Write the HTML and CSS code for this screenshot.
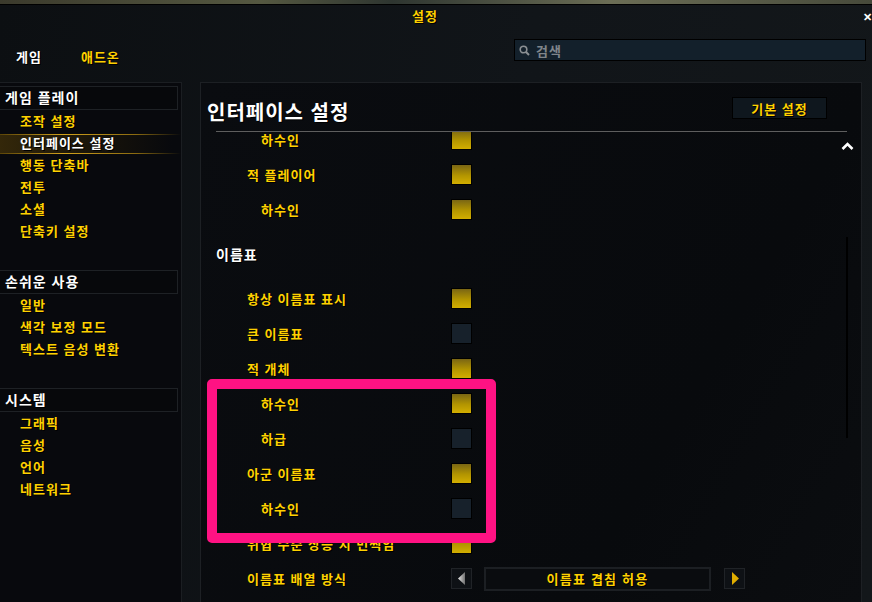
FILE: index.html
```html
<!DOCTYPE html>
<html lang="ko">
  <head>
    <meta charset="UTF-8">
    <title>설정</title>
    <link rel="stylesheet" href="styles.css">
  </head>
  <body>
    <div class="backdrop"></div>
    <div class="window">
      <div class="titlebar">
        <span class="title">설정</span>
        <span class="close">✕</span>
      </div>
      <div class="toolbar">
        <div class="tabs">
          <span class="tab">게임</span>
          <span class="tab active">애드온</span>
        </div>
        <div class="search">
          <svg width="11" height="11" viewBox="0 0 11 11"><circle cx="4.5" cy="4.5" r="3.3" fill="none" stroke="#8b8f93" stroke-width="1.6"/><path d="M7 7l3 3" stroke="#8b8f93" stroke-width="2"/></svg>
          <span>검색</span>
        </div>
      </div>
      <div class="main">
        <aside class="sidebar">
          <div class="group">
            <div class="group-head">게임 플레이</div>
            <div class="item">조작 설정</div>
            <div class="item selected">인터페이스 설정</div>
            <div class="item">행동 단축바</div>
            <div class="item">전투</div>
            <div class="item">소셜</div>
            <div class="item">단축키 설정</div>
          </div>
          <div class="group">
            <div class="group-head">손쉬운 사용</div>
            <div class="item">일반</div>
            <div class="item">색각 보정 모드</div>
            <div class="item">텍스트 음성 변환</div>
          </div>
          <div class="group">
            <div class="group-head">시스템</div>
            <div class="item">그래픽</div>
            <div class="item">음성</div>
            <div class="item">언어</div>
            <div class="item">네트워크</div>
          </div>
        </aside>
        <section class="panel">
          <div class="panel-head">
            <h1>인터페이스 설정</h1>
            <button class="btn">기본 설정</button>
          </div>
          <div class="rule"></div>
          <div class="panel-body">
            <div class="list">
              <div class="row first"><span class="label sub">하수인</span><span class="check on"></span></div>
              <div class="row"><span class="label">적 플레이어</span><span class="check on"></span></div>
              <div class="row"><span class="label sub">하수인</span><span class="check on"></span></div>
              <div class="section">이름표</div>
              <div class="row"><span class="label">항상 이름표 표시</span><span class="check on"></span></div>
              <div class="row"><span class="label">큰 이름표</span><span class="check"></span></div>
              <div class="row"><span class="label">적 개체</span><span class="check on"></span></div>
              <div class="row"><span class="label sub">하수인</span><span class="check on"></span></div>
              <div class="row"><span class="label sub">하급</span><span class="check"></span></div>
              <div class="row"><span class="label">아군 이름표</span><span class="check on"></span></div>
              <div class="row"><span class="label sub">하수인</span><span class="check"></span></div>
              <div class="row"><span class="label">위협 수준 상승 시 번쩍임</span><span class="check on"></span></div>
              <div class="row">
                <span class="label">이름표 배열 방식</span>
                <span class="arrow">
                  <svg width="8" height="13" viewBox="0 0 8 13"><defs><linearGradient id="gl" x1="0" y1="0" x2="1" y2="0"><stop offset="0" stop-color="#e8e8e8"/><stop offset="1" stop-color="#6f6f6f"/></linearGradient></defs><path d="M7 0v13L0 6.5z" fill="url(#gl)"/></svg>
                </span>
                <span class="select">이름표 겹침 허용</span>
                <span class="arrow">
                  <svg width="8" height="13" viewBox="0 0 8 13"><path d="M1 0v13l7-6.5z" fill="#e0ad00"/></svg>
                </span>
              </div>
            </div>
            <div class="scrollbar">
              <svg width="13" height="8" viewBox="0 0 13 8"><path d="M1.5 7L6.5 2l5 5" fill="none" stroke="#fff" stroke-width="2.6"/></svg>
              <div class="track"></div>
            </div>
          </div>
        </section>
      </div>
    </div>
    <div class="highlight"></div>
  </body>
</html>
```

FILE: styles.css
```css
html,
body {
  margin: 0;
  height: 602px;
  overflow: hidden;
  background: linear-gradient(180deg, #1b2a26, #2d2620 60%, #1a1715);
  font-family: "Noto Sans CJK KR", "Noto Sans", sans-serif;
  font-weight: bold;
  letter-spacing: 1px;
  color: #ffd100;
}
.backdrop {
  height: 4px;
  background: linear-gradient(90deg, #3b3a2c, #555841 30%, #2e3530 45%, #6b6d55 70%, #474a3b);
  border-bottom: 1px solid #000;
}
.window {
  height: 597px;
  background: linear-gradient(100deg, #0c0f12, #111519 55%, #13171a);
  display: flex;
  flex-direction: column;
}
.titlebar {
  position: relative;
  height: 26px;
  line-height: 22px;
  font-size: 13px;
  text-align: center;
  padding-right: 22px;
}
.title {
  text-shadow: 1px 1px 0 #000;
}
.close {
  position: absolute;
  right: 0;
  top: 0;
  color: #fff;
  font-size: 11px;
  letter-spacing: 0;
}
.toolbar {
  height: 51px;
  display: flex;
  align-items: flex-start;
}
.tabs {
  display: flex;
  gap: 39px;
  padding: 17px 0 0 16px;
  line-height: 18px;
  font-size: 13px;
}
.tab {
  color: #fff;
  text-shadow: 1px 1px 0 #000;
}
.tab.active {
  color: #ffd100;
}
.search {
  margin: 8px 6px 0 auto;
  width: 352px;
  height: 22px;
  box-sizing: border-box;
  background: #13202b;
  border: 1px solid #000;
  display: flex;
  align-items: center;
  gap: 6px;
  padding-left: 4px;
  font-size: 13px;
  color: #7f858b;
}
.main {
  flex: 1;
  display: flex;
  min-height: 0;
}
.sidebar {
  width: 181px;
  border-top: 1px solid #1b1e22;
  border-right: 1px solid #1b1e22;
  background: #08090d;
  padding-top: 3px;
}
.group + .group {
  margin-top: 28px;
}
.group-head {
  margin-right: 3px;
  height: 24px;
  box-sizing: border-box;
  border: 1px solid #1e2125;
  border-left: none;
  background: #07080b;
  padding-left: 5px;
  line-height: 21px;
  font-size: 14px;
  color: #fff;
  text-shadow: 1px 1px 0 #000;
}
.item {
  height: 22px;
  line-height: 22px;
  padding-left: 20px;
  font-size: 13px;
  text-shadow: 1px 1px 0 #000;
}
.item.selected {
  color: #fff;
  background:
    linear-gradient(90deg, #5a4408, #d2a21c 35%, #8a6a10 75%, transparent) 0 2px / 100% 1px no-repeat,
    linear-gradient(90deg, #5a4408, #d2a21c 35%, #8a6a10 75%, transparent) 0 21px / 100% 1px no-repeat,
    linear-gradient(90deg, rgba(70, 52, 8, 0.7), rgba(40, 30, 6, 0.4) 60%, transparent 95%) 0 3px / 100% 18px no-repeat;
}
.panel {
  margin-left: 18px;
  width: 660px;
  border: 1px solid #1d2024;
  border-bottom: none;
  background: linear-gradient(120deg, #0a0c10, #080a0d 70%, #0b0d10);
  display: flex;
  flex-direction: column;
  min-height: 0;
}
.panel-head {
  height: 48px;
  box-sizing: border-box;
  display: flex;
  align-items: flex-start;
  padding: 14px 34px 0 6px;
}
.panel-head h1 {
  margin: 2px 0 0;
  font-size: 20px;
  line-height: 26px;
  color: #fff;
  text-shadow: 1px 1px 0 #000;
}
.btn {
  margin-left: auto;
  width: 95px;
  height: 22px;
  background: #0f171e;
  border: 1px solid #000;
  font: inherit;
  font-size: 13px;
  letter-spacing: 1px;
  color: #ffd100;
  text-shadow: 1px 1px 0 #000;
  padding: 0;
}
.rule {
  height: 1px;
  margin: 0 14px 0 15px;
  background: #5e5e5e;
}
.panel-body {
  flex: 1;
  display: flex;
  overflow: hidden;
}
.list {
  flex: 1;
  padding-left: 15px;
}
.row {
  height: 35px;
  display: flex;
  align-items: center;
  font-size: 13px;
  text-shadow: 1px 1px 0 #000;
}
.row.first {
  margin-top: -10px;
}
.label {
  flex: 0 0 235px;
  box-sizing: border-box;
  padding-left: 31px;
}
.label.sub {
  padding-left: 45px;
}
.section {
  height: 54px;
  line-height: 54px;
  font-size: 14px;
  color: #fff;
  text-shadow: 1px 1px 0 #000;
}
.check {
  width: 19px;
  height: 19px;
  border: 1px solid #000;
  background: #17212b;
}
.check.on {
  background: linear-gradient(180deg, #7a6614, #b39500 55%, #d2ae00);
}
.arrow {
  width: 19px;
  height: 19px;
  border: 1px solid #202327;
  background: #0e1115;
  display: flex;
  align-items: center;
  justify-content: center;
}
.select {
  width: 223px;
  height: 20px;
  margin: 0 13px 0 12px;
  border: 2px solid #1c1f23;
  background: #0a0c0f;
  text-align: center;
  line-height: 20px;
  letter-spacing: 1.2px;
}
.scrollbar {
  width: 16px;
  margin-right: 6px;
  display: flex;
  flex-direction: column;
  align-items: center;
  padding-top: 10px;
}
.track {
  width: 2px;
  height: 201px;
  margin-top: 87px;
  background: #000;
}
.highlight {
  position: absolute;
  left: 207px;
  top: 379px;
  width: 289px;
  height: 164px;
  box-sizing: border-box;
  border: 10px solid #ff1283;
  border-radius: 5px;
}
```
